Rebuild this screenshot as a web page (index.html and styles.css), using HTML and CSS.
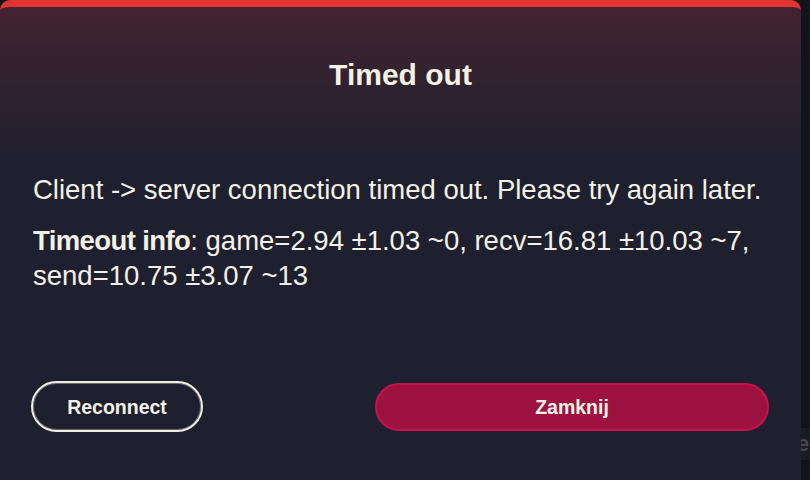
FILE: index.html
```html
<!DOCTYPE html>
<html lang="en">
<head>
    <meta charset="UTF-8">
    <meta name="viewport" content="width=device-width, initial-scale=1.0">
    <title>Timed out</title>
    <link rel="stylesheet" href="styles.css">
</head>
<body>
    <div class="screen">
        <div class="dialog">
            <h1 class="dialog-title">Timed out</h1>

            <div class="dialog-body">
                <p>Client -&gt; server connection timed out. Please try again later.</p>
                <p><b>Timeout info</b>: game=2.94 ±1.03 ~0, recv=16.81 ±10.03 ~7, send=10.75 ±3.07 ~13</p>
            </div>

            <div class="dialog-actions">
                <button class="btn btn-outline">Reconnect</button>
                <button class="btn btn-primary">Zamknij</button>
            </div>
        </div>

        <!-- page behind the modal, mostly covered -->
        <div class="backdrop">
            <div class="backdrop-chip">er</div>
        </div>
    </div>
</body>
</html>
```

FILE: styles.css
```css
html, body {
    margin: 0;
    padding: 0;
    height: 100%;
    background-color: #13131a;
}
body {
    font-family: "Liberation Sans", Arial, sans-serif;
    color: #f4f1e4;
}
.screen {
    display: flex;
    height: 480px;
    overflow: hidden;
}
.dialog {
    position: relative;
    z-index: 1;
    width: 801px;
    flex-shrink: 0;
    box-sizing: border-box;
    border-top: 7px solid #e33232;
    border-radius: 10px 10px 0 0;
    background: linear-gradient(to bottom, #43232f 0px, #2f2230 80px, #1e2030 165px, #1e2030 100%);
    padding: 0 32px;
    display: flex;
    flex-direction: column;
}
.dialog-title {
    margin: 50px 0 0;
    text-align: center;
    font-size: 30px;
    line-height: 36px;
    font-weight: bold;
}
.dialog-body {
    margin-top: 79px;
    font-size: 27.5px;
    line-height: 35px;
}
.dialog-body p {
    margin: 0 0 16px;
    padding-left: 1px;
}
.dialog-body b {
    letter-spacing: -0.6px;
}
.dialog-actions {
    margin-top: 72px;
    display: flex;
    align-items: center;
    justify-content: space-between;
}
.btn {
    font-family: "Liberation Sans", Arial, sans-serif;
    font-size: 19.5px;
    font-weight: bold;
    color: #f4f1e4;
    border-radius: 26px;
    cursor: pointer;
    padding-top: 2px;
}
.btn-outline {
    width: 172px;
    height: 51px;
    margin-left: -1px;
    background-color: #1e2030;
    border: 2px solid #f1eedd;
    box-shadow: inset 0 0 0 1px #656a7b;
}
.btn-primary {
    width: 394px;
    height: 48px;
    background-color: #9e1242;
    border: 2px solid #c8124a;
}
.backdrop {
    flex: 1;
    position: relative;
    background-color: #13131a;
}
.backdrop-chip {
    position: absolute;
    top: 428px;
    left: -4px;
    width: 40px;
    height: 32px;
    background-color: #1a1b23;
    color: #454650;
    font-size: 22px;
    font-weight: bold;
    line-height: 32px;
}
```
